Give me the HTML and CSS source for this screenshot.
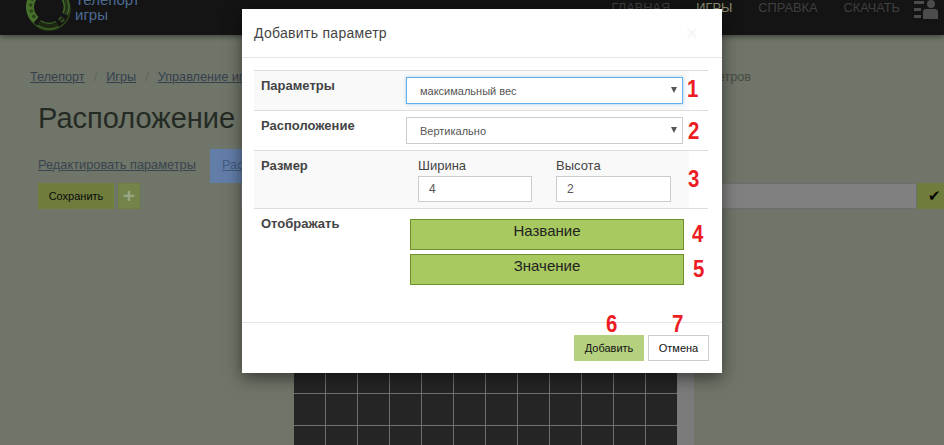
FILE: index.html
```html
<!DOCTYPE html>
<html lang="en">
<head>
    <meta charset="UTF-8">
    <meta name="viewport" content="width=device-width, initial-scale=1.0">
    <title>Расположение - Телепорт</title>
    <link rel="stylesheet" href="styles.css">
</head>
<body>

    <header class="topbar">
        <a class="logo" href="#">
            <svg class="logo-ring" width="48" height="36" viewBox="0 0 48 36" fill="none">
                <circle cx="25" cy="9" r="21" stroke="#2c4418" stroke-width="1.5"/>
                <path d="M10 -4 A17 17 0 0 0 12 20" stroke="#47702a" stroke-width="8"/>
                <path d="M9 -2 A17 17 0 0 0 11 18" stroke="#2a3f1a" stroke-width="3" stroke-dasharray="3 3"/>
                <path d="M15 23 A17 17 0 0 0 33 24" stroke="#42662a" stroke-width="7"/>
                <path d="M15 23 A17 17 0 0 0 33 24" stroke="#1b2613" stroke-width="4.5"/>
                <path d="M36 21 L39 18" stroke="#42662a" stroke-width="5"/>
                <path d="M36 21 L39 18" stroke="#1b2613" stroke-width="2.5"/>
                <path d="M41 14 A17 17 0 0 0 40 -2" stroke="#42662a" stroke-width="6"/>
                <path d="M41 14 A17 17 0 0 0 40 -2" stroke="#24351a" stroke-width="3"/>
            </svg>
            <span class="logo-text">Телепорт<br>игры</span>
        </a>
        <nav class="topnav">
            <a href="#">ГЛАВНАЯ</a>
            <a href="#" class="active">ИГРЫ</a>
            <a href="#">СПРАВКА</a>
            <a href="#">СКАЧАТЬ</a>
            <svg class="user-icon" width="24" height="19" viewBox="0 0 24 19">
                <rect x="0" y="1" width="10" height="3" fill="#4c4c4c"/>
                <rect x="0" y="8" width="7" height="3" fill="#4c4c4c"/>
                <rect x="0" y="15" width="7" height="3" fill="#4c4c4c"/>
                <circle cx="17" cy="4" r="4" fill="#4c4c4c"/>
                <path d="M9 19 V12 Q9 9 12 9 H21 Q24 9 24 12 V19 Z" fill="#4c4c4c"/>
            </svg>
        </nav>
    </header>

    <main class="page">
        <ul class="breadcrumbs">
            <li><a href="#">Телепорт</a></li>
            <li><a href="#">Игры</a></li>
            <li><a href="#">Управление играми</a></li>
            <li class="crumb-last">Расположение параметров</li>
        </ul>

        <h1 class="page-title">Расположение</h1>

        <div class="tabs">
            <a href="#" class="tab">Редактировать параметры</a>
            <a href="#" class="tab tab-active">Расположение</a>
        </div>

        <div class="toolbar">
            <button class="btn-save">Сохранить</button>
            <button class="btn-plus">+</button>
            <input class="toolbar-input" type="text">
            <button class="btn-check">&#10004;</button>
        </div>

        <div class="field-wrap">
            <div class="field-grid"></div>
        </div>
    </main>

    <div class="modal">
        <div class="modal-header">
            <h4>Добавить параметр</h4>
            <span class="modal-close">&times;</span>
        </div>

        <div class="modal-body">
            <div class="param-row">
                <div class="param-cells striped">
                    <span class="param-label">Параметры</span>
                    <div class="select-wrap">
                        <select class="control focused">
                            <option>максимальный вес</option>
                        </select>
                    </div>
                </div>
                <span class="mark mark-1">1</span>
            </div>

            <div class="param-row">
                <div class="param-cells">
                    <span class="param-label">Расположение</span>
                    <div class="select-wrap">
                        <select class="control">
                            <option>Вертикально</option>
                        </select>
                    </div>
                </div>
                <span class="mark mark-2">2</span>
            </div>

            <div class="param-row">
                <div class="param-cells striped size-cells">
                    <span class="param-label">Размер</span>
                    <div class="size-fields">
                        <label>Ширина<input class="control" type="text" value="4"></label>
                        <label>Высота<input class="control" type="text" value="2"></label>
                    </div>
                </div>
                <span class="mark mark-3">3</span>
            </div>

            <div class="param-row">
                <div class="param-cells show-cells">
                    <span class="param-label">Отображать</span>
                    <div class="toggles">
                        <button class="toggle">Название</button>
                        <button class="toggle">Значение</button>
                    </div>
                </div>
                <span class="mark mark-4">4</span>
                <span class="mark mark-5">5</span>
            </div>
        </div>

        <div class="modal-footer">
            <span class="mark mark-6">6</span>
            <span class="mark mark-7">7</span>
            <button class="btn-add">Добавить</button>
            <button class="btn-cancel">Отмена</button>
        </div>
    </div>

</body>
</html>
```

FILE: styles.css
```css
* { box-sizing: border-box; margin: 0; padding: 0; }

html, body {
    height: 445px;
    overflow: hidden;
}

/* page colours are the dimmed ones, as seen behind the open dialog */
body {
    position: relative;
    font-family: "Liberation Sans", Arial, sans-serif;
    background-color: #6f7568;
    color: #252a24;
}

/* top bar, page is scrolled a little so it is cut at the top */
.topbar {
    height: 35px;
    background-color: #141414;
    display: flex;
    justify-content: space-between;
    overflow: hidden;
    box-shadow: 0 2px 5px rgba(0,0,0,0.4);
    position: relative;
}

.logo {
    display: flex;
    margin-left: 24px;
    text-decoration: none;
}

.logo-ring {
    display: block;
}

.logo-text {
    margin: -8px 0 0 3px;
    font-size: 15px;
    line-height: 15px;
    color: #4d6a92;
}

.topnav {
    display: flex;
    align-items: flex-start;
    gap: 26px;
    padding-right: 6px;
}

.topnav a {
    font-size: 12.8px;
    line-height: 16px;
    color: #3f3f3f;
    text-decoration: none;
}

.topnav a.active {
    color: #8d8d70;
}

.user-icon {
    margin-left: -12px;
    display: block;
}

/* page under the dialog */
.breadcrumbs {
    list-style: none;
    display: flex;
    padding: 34px 193px 0 30px;
    font-size: 12.7px;
    line-height: 16px;
    white-space: nowrap;
}

.breadcrumbs li + li::before {
    content: "/";
    color: #5f6458;
    margin: 0 9px;
}

.breadcrumbs a {
    color: #37404f;
}

.crumb-last {
    margin-left: auto;
    color: #474b44;
}

.page-title {
    font-size: 29px;
    font-weight: normal;
    line-height: 34px;
    margin: 16px 0 0 38px;
    white-space: nowrap;
}

.tabs {
    display: flex;
    align-items: stretch;
    margin: 14px 0 0 38px;
    height: 34px;
    font-size: 12.8px;
}

.tab {
    color: #3a4450;
    line-height: 32px;
}

.tab-active {
    background-color: #627da8;
    margin-left: 14px;
    padding: 0 12px;
    color: #455a7c;
    width: 200px;
}

.toolbar {
    display: flex;
    height: 26px;
    margin-left: 38px;
}

.btn-save {
    width: 76px;
    border: 1px solid #72813e;
    background-color: #6e7d3c;
    font-family: inherit;
    font-size: 11px;
    color: #0a0a0a;
}

.btn-plus {
    width: 22px;
    margin-left: 4px;
    border: 1px solid #72813e;
    background-color: #74834a;
    color: #9aa585;
    font-family: inherit;
    font-size: 21px;
    font-weight: bold;
    line-height: 20px;
}

.toolbar-input {
    flex: 1;
    margin-left: 100px;
    border: 1px solid #6e6e6e;
    background-color: #808080;
}

.btn-check {
    width: 27px;
    padding-left: 7px;
    border: none;
    background-color: #6e7d3c;
    color: #000;
    font-size: 15px;
}

.field-wrap {
    margin: 16px 0 0 294px;
    width: 400px;
    height: 220px;
    background-color: #7b7b7b;
}

.field-grid {
    width: 383px;
    height: 100%;
    background-color: #252525;
    background-image:
        linear-gradient(to right, #707070 1px, transparent 1px),
        linear-gradient(to bottom, #707070 1px, transparent 1px);
    background-size: 32px 32px;
    background-position: 31px 8px;
}

/* dialog */
.modal {
    position: absolute;
    left: 242px;
    top: 9px;
    width: 480px;
    height: 364px;
    background-color: #fff;
    box-shadow: 0 5px 15px rgba(0,0,0,0.5);
    display: flex;
    flex-direction: column;
}

.modal-header {
    height: 49px;
    padding: 0 24px 0 12px;
    border-bottom: 1px solid #e5e5e5;
    display: flex;
    justify-content: space-between;
    align-items: center;
}

.modal-header h4 {
    font-size: 14px;
    font-weight: normal;
    color: #444;
    letter-spacing: 0.3px;
}

.modal-close {
    font-size: 21px;
    font-weight: bold;
    color: #000;
    opacity: 0.03;
}

.modal-body {
    flex: 1;
    padding: 12px 0 0 12px;
}

.param-row {
    width: 454px;
    border-top: 1px solid #ddd;
    position: relative;
}

.param-cells {
    width: 435px;
    height: 39px;
    padding-top: 6px;
    display: flex;
}

.striped {
    background-color: #f9f9f9;
}

.size-cells {
    height: 57px;
}

.show-cells {
    height: 80px;
}

.param-label {
    width: 152px;
    padding-left: 7px;
    font-size: 13px;
    font-weight: bold;
    line-height: 18px;
    color: #444;
}

.select-wrap {
    position: relative;
    width: 277px;
    flex-shrink: 0;
}

.select-wrap::after {
    content: "";
    position: absolute;
    right: 6px;
    top: 10px;
    border-left: 3px solid transparent;
    border-right: 3px solid transparent;
    border-top: 6px solid #555;
}

.control {
    display: block;
    width: 100%;
    height: 27px;
    padding: 0 13px;
    border: 1px solid #ccc;
    background-color: #fff;
    font-family: inherit;
    font-size: 11px;
    color: #555;
    appearance: none;
    border-radius: 0;
    outline: none;
}

.control.focused {
    border-color: #66afe9;
    box-shadow: 0 0 3px rgba(102,175,233,0.6);
}

.size-fields {
    display: flex;
    gap: 24px;
    margin-left: 12px;
}

.size-fields label {
    width: 115px;
    font-size: 13px;
    line-height: 18px;
    color: #444;
}

.size-fields label:first-child {
    width: 114px;
}

.size-fields .control {
    height: 26px;
    margin-top: 1px;
    padding: 0 10px;
    font-size: 12px;
}

.toggles {
    margin: 4px 0 0 4px;
    width: 274px;
    display: flex;
    flex-direction: column;
    gap: 4px;
}

.toggle {
    height: 31px;
    padding-bottom: 9px;
    border: 1px solid #6f8f2e;
    background-color: #a8c95f;
    font-family: inherit;
    font-size: 15px;
    color: #222;
    border-radius: 0;
}

.modal-footer {
    height: 51px;
    border-top: 1px solid #e5e5e5;
    padding: 12px 13px 0 0;
    display: flex;
    justify-content: flex-end;
    gap: 4px;
    position: relative;
}

.btn-add,
.btn-cancel {
    height: 26px;
    font-family: inherit;
    font-size: 11px;
    color: #111;
    border-radius: 0;
}

.btn-add {
    width: 70px;
    border: 1px solid #b5d07f;
    background-color: #b5d07f;
}

.btn-cancel {
    width: 61px;
    border: 1px solid #ccc;
    background-color: #fff;
}

/* red numbers drawn on top of the screenshot */
.mark {
    position: absolute;
    font-size: 24px;
    font-weight: bold;
    line-height: 25px;
    color: #ed1c24;
    transform: scaleX(0.85);
    transform-origin: left top;
}

.mark-1 { left: 433px; top: 5px; }
.mark-2 { left: 434px; top: 7px; }
.mark-3 { left: 434px; top: 15px; }
.mark-4 { left: 438px; top: 12px; }
.mark-5 { left: 439px; top: 47px; }
.mark-6 { left: 364px; top: -12px; }
.mark-7 { left: 430px; top: -12px; }
```
